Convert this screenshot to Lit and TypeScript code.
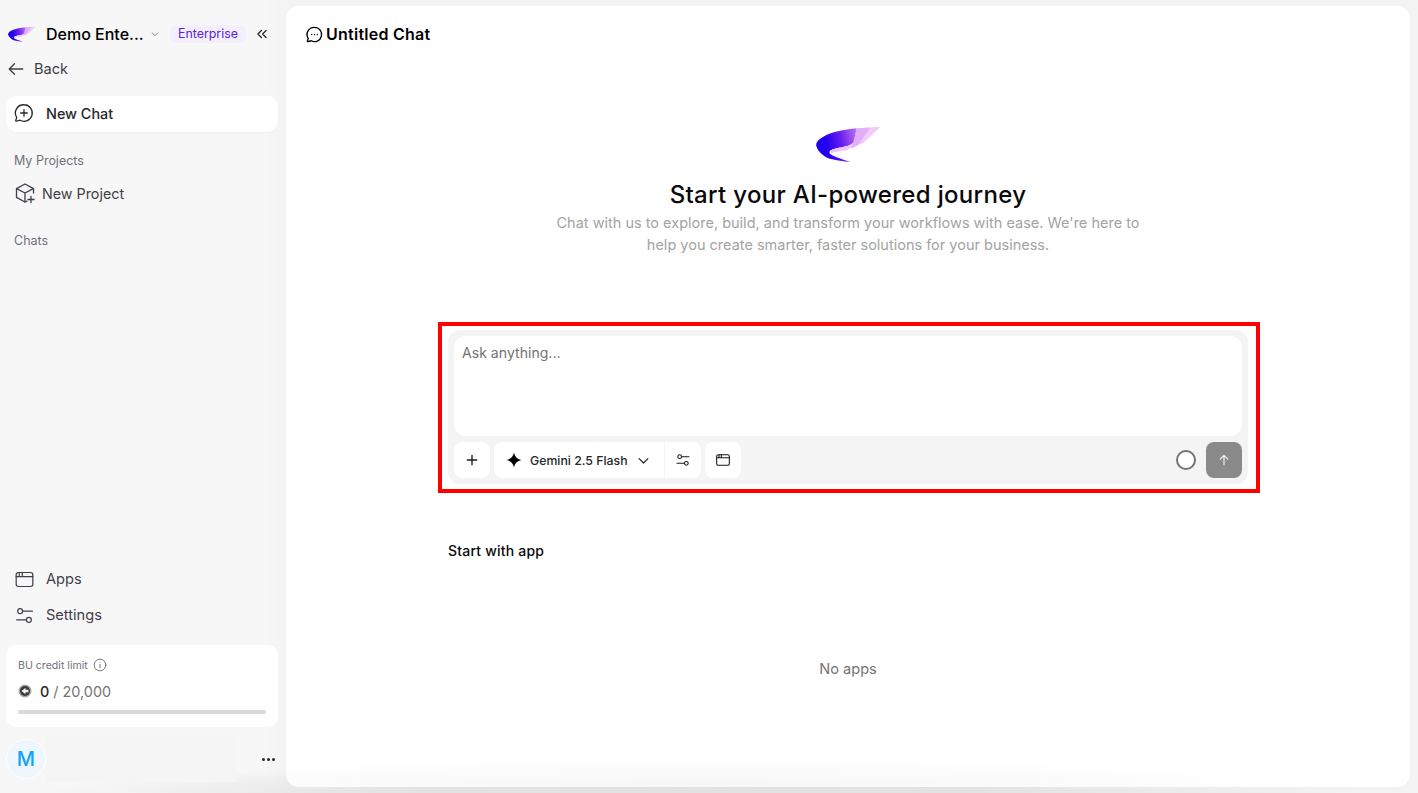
import { LitElement, css, html, svg } from "lit";
import { customElement } from "lit/decorators.js";

const logo = (w: number, h: number) => html`
  <svg width=${w} height=${h} viewBox="0 0 65 36" aria-hidden="true">
    <defs>
      <linearGradient id="wing" gradientUnits="userSpaceOnUse" x1="0" y1="20" x2="42" y2="10">
        <stop offset="0.25" stop-color="#2200f0" />
        <stop offset="0.6" stop-color="#6a1eee" />
        <stop offset="1" stop-color="#bb70f4" />
      </linearGradient>
    </defs>
    <path d="M64.5 .8C56 1.2 50 1.8 46 2.2L38 20C43 19 47 17.5 49.5 15Z" fill="#f0ccfc" />
    <path d="M54 1.5C50 1.8 45 2 40.7 2.3L37 17 34 22.5C38 21.5 41 20 43.5 17.5Z" fill="#e3aef9" />
    <path
      d="M40.7 2.3C28 3.5 15 6 7.3 10.7 2 13.5-.5 17 .3 20 1.5 25 7 30 13 32.5 20 34.5 28 35.5 34.5 36 26 33 19 31 15 28.5 13.5 27.5 13 26 14 25 16 23 21 22 27 21 32 20 36 18.5 37.5 16Z"
      fill="url(#wing)"
    />
    <path d="M14 25C16 23 21 22 27 21 32 20 36 19 38 16L32 24C26 25.5 20 25 15 27.5Z" fill="#eec6fb" />
  </svg>
`;

const stroke = (size: number, body: unknown, vb = 24, sw = 1.6) => html`
  <svg
    width=${size}
    height=${size}
    viewBox="0 0 ${vb} ${vb}"
    fill="none"
    stroke="currentColor"
    stroke-width=${sw}
    stroke-linecap="round"
    stroke-linejoin="round"
    aria-hidden="true"
  >
    ${body}
  </svg>
`;

const bubble = svg`<path d="M12 3a9 9 0 1 1-4.3 16.9L3.6 21c-.4.1-.7-.2-.6-.6l1-3.6A9 9 0 0 1 12 3Z" />`;

const browserIcon = (size: number, sw = 1.6) =>
  stroke(
    size,
    svg`<rect x="2.5" y="4" width="19" height="16" rx="2.5" /><path d="M2.5 8.6h19M6 4v4.6M9.5 4v4.6" />`,
    24,
    sw,
  );

const slidersIcon = (size: number, sw = 1.6) =>
  stroke(
    size,
    svg`<circle cx="7" cy="7" r="2.8" /><path d="M10 7h11" /><circle cx="17" cy="17" r="2.8" /><path d="M3 17h11" />`,
    24,
    sw,
  );

@customElement("app-root")
export class AppRoot extends LitElement {
  render() {
    return html`
      <aside class="sidebar">
        <div class="brand">
          <span class="brand-logo">${logo(28, 16)}</span>
          <span class="brand-name">Demo Ente...</span>
          <span class="brand-caret">${stroke(10, svg`<path d="m5 9 7 7 7-7" />`, 24, 2)}</span>
          <span class="plan">Enterprise</span>
          <span class="collapse">
            ${stroke(14, svg`<path d="M11 6 5 12l6 6M19 6l-6 6 6 6" />`, 24, 2.2)}
          </span>
        </div>
        <div class="back">
          ${stroke(18, svg`<path d="M21 12H3M10 5l-7 7 7 7" />`, 24, 1.8)}
          <span>Back</span>
        </div>
        <div class="new-chat">
          ${stroke(22, svg`${bubble}<path d="M12 8.4v7.2M8.4 12h7.2" />`, 24, 1.4)}
          <span>New Chat</span>
        </div>
        <div class="section">My Projects</div>
        <div class="project">
          ${stroke(
            24,
            svg`<path d="M20.5 12V7.6L12 3 3.5 7.6v8.8L12 21l2-1" /><path d="M3.7 7.7 12 12l8.3-4.3M12 12v9" /><path d="M18 15.5v6M15 18.5h6" />`,
            24,
            1.3,
          )}
          <span>New Project</span>
        </div>
        <div class="section chats">Chats</div>

        <div class="bottom">
          <div class="nav-row">${browserIcon(21, 1.4)}<span>Apps</span></div>
          <div class="nav-row">${slidersIcon(21, 1.4)}<span>Settings</span></div>
          <div class="credit">
            <div class="credit-label">
              <span>BU credit limit</span>
              ${stroke(14, svg`<circle cx="12" cy="12" r="10" /><path d="M12 11v6M12 7.4v.1" />`, 24, 1.6)}
            </div>
            <div class="credit-value">
              <span class="coin">
                <svg width="14" height="14" viewBox="0 0 14 14" aria-hidden="true">
                  <circle cx="7" cy="7" r="6.5" fill="#a8a8a8" />
                  <circle cx="7" cy="7" r="5" fill="#3a3a3e" />
                  <path d="M3.5 7 7.5 3.8v2h3v2.4h-3v2Z" fill="#f2f2f2" />
                </svg>
              </span>
              <strong>0</strong>
              <span class="credit-total">/ 20,000</span>
            </div>
            <div class="credit-track"></div>
          </div>
          <div class="user">
            <span class="avatar">M</span>
            <span class="user-name"></span>
            <span class="more"><i></i><i></i><i></i></span>
          </div>
        </div>
      </aside>

      <main class="main">
        <header class="title">
          ${stroke(19, svg`${bubble}<path d="M8.5 12h.01M12 12h.01M15.5 12h.01" />`, 24, 1.7)}
          <span>Untitled Chat</span>
        </header>

        <div class="hero">
          ${logo(65, 36)}
          <h1>Start your AI-powered journey</h1>
          <p>
            Chat with us to explore, build, and transform your workflows with ease. We're here to
            help you create smarter, faster solutions for your business.
          </p>
        </div>

        <div class="highlight">
          <div class="composer">
            <div class="input">Ask anything...</div>
            <div class="toolbar">
              <span class="tool">${stroke(16, svg`<path d="M12 5v14M5 12h14" />`, 24, 2)}</span>
              <span class="tool model">
                <svg width="16" height="16" viewBox="0 0 18 18" aria-hidden="true">
                  <path d="M9 .5C10 5.4 12.6 8 17.5 9 12.6 10 10 12.6 9 17.5 8 12.6 5.4 10 .5 9 5.4 8 8 5.4 9 .5Z" fill="#000" />
                </svg>
                <span>Gemini 2.5 Flash</span>
                ${stroke(15, svg`<path d="m5 9 7 7 7-7" />`, 24, 2)}
              </span>
              <span class="tool params">${slidersIcon(16)}</span>
              <span class="tool">${browserIcon(16)}</span>
              <span class="spacer"></span>
              <span class="ring"></span>
              <span class="send">${stroke(14, svg`<path d="M12 20V4M5.5 10.5 12 4l6.5 6.5" />`, 24, 2)}</span>
            </div>
          </div>
        </div>

        <div class="apps">
          <h2>Start with app</h2>
          <div class="empty">No apps</div>
        </div>
      </main>
    `;
  }

  static styles = css`
    :host {
      display: flex;
      width: 1418px;
      height: 793px;
      overflow: hidden;
      background:
        radial-gradient(ellipse 660px 30px at 700px 100%, #e2e2e2 40%, rgba(226, 226, 226, 0)),
        linear-gradient(90deg, #f7f7f8 265px, #f3f3f3 290px);
      font-family: Inter, "Liberation Sans", sans-serif;
      color: #18181b;
    }

    * {
      box-sizing: border-box;
    }

    svg {
      display: block;
      flex: none;
    }

    .sidebar {
      width: 286px;
      flex: none;
      display: flex;
      flex-direction: column;
      padding: 0 8px 0 6px;
    }

    .brand {
      height: 26px;
      margin-top: 21px;
      display: flex;
      align-items: center;
      padding-left: 2px;
    }

    .brand-logo {
      width: 38px;
    }

    .brand-name {
      font-size: 16px;
      font-weight: 500;
      color: #000;
      width: 104px;
      white-space: nowrap;
    }

    .brand-caret {
      color: #71717a;
      width: 21px;
    }

    .plan {
      height: 18px;
      line-height: 18px;
      padding: 0 8px;
      border-radius: 6px;
      background: #f3effd;
      color: #5b21e0;
      font-size: 12.4px;
      margin-left: -1px;
    }

    .collapse {
      margin-left: 9px;
      color: #27272a;
    }

    .back {
      display: flex;
      align-items: center;
      gap: 9px;
      height: 24px;
      margin-top: 10px;
      padding-left: 1px;
      font-size: 14.6px;
      color: #3f3f46;
    }

    .new-chat {
      height: 36px;
      margin-top: 15px;
      padding: 0 0 2px 7px;
      display: flex;
      align-items: center;
      gap: 11px;
      border-radius: 10px;
      background: #fff;
      box-shadow: 0 1px 3px rgba(0, 0, 0, 0.03);
      font-size: 14.4px;
      font-weight: 500;
      color: #27272a;
    }

    .section {
      margin: 20px 0 0 8px;
      height: 18px;
      line-height: 18px;
      font-size: 12.5px;
      color: #71717a;
    }

    .project {
      display: flex;
      align-items: center;
      gap: 5.5px;
      height: 24px;
      margin-top: 11px;
      padding-left: 6.5px;
      font-size: 14.3px;
      color: #3f3f46;
    }

    .chats {
      margin-top: 27px;
    }

    .bottom {
      margin-top: auto;
    }

    .nav-row {
      display: flex;
      align-items: center;
      gap: 11.5px;
      height: 24px;
      margin-bottom: 12px;
      padding-left: 7.5px;
      font-size: 14.6px;
      color: #3f3f46;
    }

    .credit {
      height: 82px;
      margin-top: 18px;
      padding: 12px 12px 0;
      border-radius: 10px;
      background: #fff;
    }

    .credit-label {
      display: flex;
      align-items: center;
      gap: 5px;
      height: 16px;
      font-size: 10.6px;
      color: #71717a;
    }

    .credit-value {
      display: flex;
      align-items: center;
      height: 22px;
      margin-top: 7px;
      font-size: 14.4px;
    }

    .coin {
      width: 22px;
    }

    .credit-value strong {
      font-weight: 500;
      margin-right: 4px;
      color: #27272a;
    }

    .credit-total {
      color: #737373;
    }

    .credit-track {
      height: 4px;
      margin-top: 8px;
      border-radius: 2px;
      background: #d9d9d9;
    }

    .user {
      display: flex;
      align-items: center;
      height: 40px;
      margin: 12px 0 14px;
    }

    .avatar {
      width: 40px;
      height: 40px;
      flex: none;
      display: grid;
      place-items: center;
      border-radius: 50%;
      background: #eef7fe;
      border: 1px solid #fff;
      color: #0ea5f4;
      font-size: 20px;
      font-weight: 500;
    }

    .user-name {
      width: 190px;
      height: 46px;
      background: #f5f5f5;
    }

    .more {
      margin-left: 26px;
      display: flex;
      gap: 2px;
    }

    .more i {
      width: 3px;
      height: 3px;
      border-radius: 50%;
      background: #27272a;
    }

    .main {
      width: 1124px;
      height: 781px;
      margin-top: 6px;
      border-radius: 13px;
      background: radial-gradient(ellipse 620px 30px at 414px 100%, #f6f6f6, #fff);
      display: flex;
      flex-direction: column;
      align-items: center;
    }

    .title {
      align-self: stretch;
      display: flex;
      align-items: center;
      gap: 2px;
      height: 24px;
      margin: 16px 0 0 19px;
      font-size: 16px;
      font-weight: 600;
      letter-spacing: 0.25px;
      color: #000;
    }

    .hero {
      display: flex;
      flex-direction: column;
      align-items: center;
      margin-top: 80px;
      text-align: center;
    }

    h1 {
      margin: 17px 0 0;
      font-size: 24px;
      line-height: 32px;
      font-weight: 500;
      letter-spacing: 0.32px;
      color: #09090b;
    }

    .hero p {
      margin: 1px 0 0;
      width: 600px;
      font-size: 14.5px;
      line-height: 22px;
      color: #a3a3a3;
    }

    .highlight {
      width: 822px;
      height: 171px;
      margin: 66px 0 0 2px;
      padding: 4px 8px 5px 6px;
      border: 4px solid #f00;
    }

    .composer {
      height: 154px;
      padding: 6px;
      border-radius: 12px;
      background: #f4f4f4;
    }

    .input {
      height: 100px;
      padding: 7px 8px;
      border-radius: 12px;
      background: #fff;
      font-size: 14.1px;
      line-height: 20px;
      color: #737373;
    }

    .toolbar {
      display: flex;
      align-items: center;
      gap: 4px;
      height: 36px;
      margin-top: 6px;
    }

    .tool {
      width: 36px;
      height: 36px;
      display: grid;
      place-items: center;
      border-radius: 8px;
      background: #fff;
      color: #18181b;
    }

    .model {
      width: 170px;
      display: flex;
      align-items: center;
      gap: 8px;
      padding-left: 12px;
      margin-right: -3px;
      border-radius: 8px 0 0 8px;
      font-size: 12.3px;
      font-weight: 500;
      color: #27272a;
    }

    .model span {
      width: 97.5px;
      white-space: nowrap;
    }

    .params {
      border-radius: 0 8px 8px 0;
    }

    .spacer {
      flex: 1;
    }

    .ring {
      width: 20px;
      height: 20px;
      border-radius: 50%;
      border: 2px solid #737373;
      background: #fff;
      margin-right: 6px;
    }

    .send {
      width: 36px;
      height: 36px;
      display: grid;
      place-items: center;
      border-radius: 8px;
      background: #8a8a8a;
      color: #f4f4f5;
    }

    .apps {
      width: 800px;
      margin-top: 48px;
    }

    h2 {
      margin: 0;
      font-size: 14px;
      line-height: 20px;
      font-weight: 500;
      letter-spacing: 0.2px;
      color: #09090b;
    }

    .empty {
      margin-top: 98px;
      text-align: center;
      font-size: 14.6px;
      line-height: 20px;
      color: #737373;
    }
  `;
}

declare global {
  interface HTMLElementTagNameMap {
    "app-root": AppRoot;
  }
}
